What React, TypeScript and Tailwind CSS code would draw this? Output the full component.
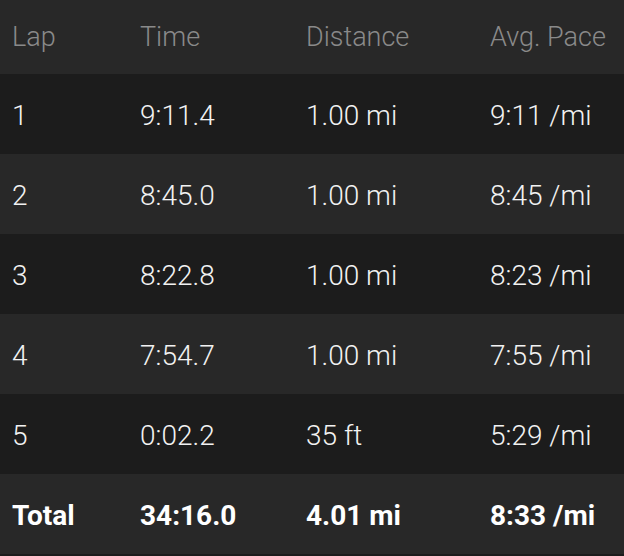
const laps = [
  { lap: "1", time: "9:11.4", distance: "1.00 mi", pace: "9:11 /mi" },
  { lap: "2", time: "8:45.0", distance: "1.00 mi", pace: "8:45 /mi" },
  { lap: "3", time: "8:22.8", distance: "1.00 mi", pace: "8:23 /mi" },
  { lap: "4", time: "7:54.7", distance: "1.00 mi", pace: "7:55 /mi" },
  { lap: "5", time: "0:02.2", distance: "35 ft", pace: "5:29 /mi" },
];

const cols = "grid grid-cols-[128px_166px_184px_1fr] items-center pl-3";

export default function App() {
  return (
    <div className="w-[624px] h-[556px] bg-[#1c1c1c] font-['Roboto',sans-serif] overflow-hidden">
      <div className={`${cols} h-[74px] bg-[#282828] text-[27px] font-light text-[#8a8a8a]`}>
        <span>Lap</span>
        <span>Time</span>
        <span>Distance</span>
        <span>Avg. Pace</span>
      </div>
      {laps.map((row, i) => (
        <div
          key={row.lap}
          className={`${cols} h-[80px] pt-1 text-[28px] font-light text-[#f2f2f2] ${i % 2 === 0 ? "bg-[#1c1c1c]" : "bg-[#282828]"}`}
        >
          <span>{row.lap}</span>
          <span>{row.time}</span>
          <span>{row.distance}</span>
          <span>{row.pace}</span>
        </div>
      ))}
      <div className={`${cols} h-[80px] pt-1 bg-[#282828] text-[28px] font-bold text-white`}>
        <span>Total</span>
        <span>34:16.0</span>
        <span>4.01 mi</span>
        <span>8:33 /mi</span>
      </div>
    </div>
  );
}
